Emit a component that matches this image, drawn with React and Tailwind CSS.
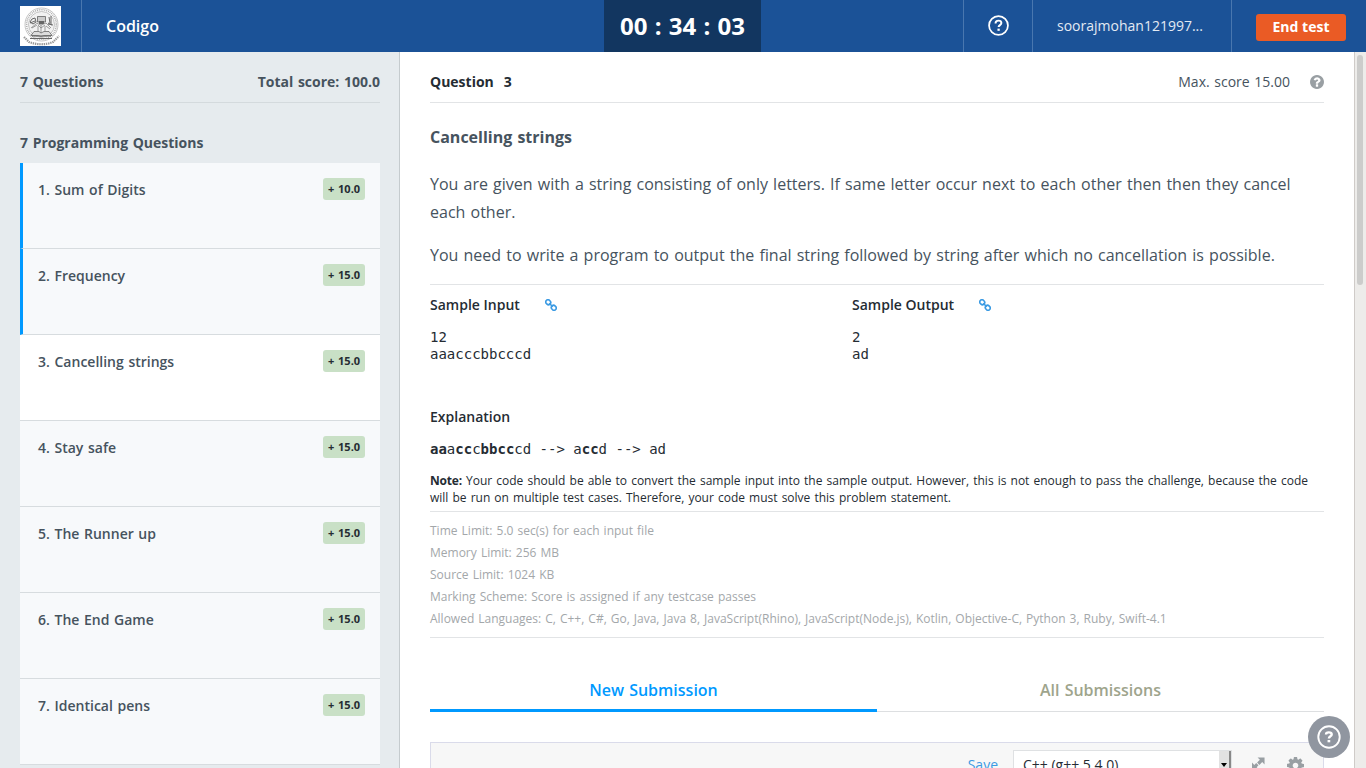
const questions = [
  { title: "Sum of Digits", score: "10.0", done: true },
  { title: "Frequency", score: "15.0", done: true },
  { title: "Cancelling strings", score: "15.0", current: true },
  { title: "Stay safe", score: "15.0" },
  { title: "The Runner up", score: "15.0" },
  { title: "The End Game", score: "15.0" },
  { title: "Identical pens", score: "15.0" },
];

function HelpRing({ className }) {
  return (
    <svg viewBox="0 0 24 24" className={className} fill="none" stroke="currentColor">
      <circle cx="12" cy="12" r="10.8" strokeWidth="2" />
      <path d="M8.6 9.6c0-2 1.4-3.2 3.3-3.2s3.4 1 3.4 2.8c0 2.3-3.2 2.4-3.2 4.6" strokeWidth="2.2" />
      <path d="M12.1 15.6v2.5" strokeWidth="2.6" />
    </svg>
  );
}

function HelpBadge({ className }) {
  return (
    <svg viewBox="0 0 24 24" className={className} fill="none" stroke="currentColor">
      <circle cx="12" cy="12" r="10.7" strokeWidth="1.9" />
      <path d="M9 9.5c0-1.4 1.3-2.1 2.8-2.1 1.7 0 2.9.7 2.9 2.1 0 1.900-2.800 1.700-2.800 4" strokeWidth="2.4" />
      <path d="M11.9 15v2.300" strokeWidth="2.700" />
    </svg>
  );
}

function QuestionCircle({ className }) {
  return (
    <svg viewBox="128 128 1536 1536" className={className} fill="currentColor">
      <path d="M1024 1376v-192q0-14-9-23t-23-9h-192q-14 0-23 9t-9 23v192q0 14 9 23t23 9h192q14 0 23-9t9-23zM1280 704q0-88-55.5-163t-138.5-116-170-41q-243 0-371 213-15 24 8 42l132 100q7 6 19 6 16 0 25-12 53-68 86-92 34-24 86-24 48 0 85.5 26t37.5 59q0 38-20 61t-68 45q-63 28-115.5 86.5t-52.5 125.5v36q0 14 9 23t23 9h192q14 0 23-9t9-23q0-19 21.5-49.5t54.5-49.5q32-18 49-28.5t46-35 44.5-48 28-60.5 12.5-81zM1664 896q0 209-103 385.5t-279.5 279.5-385.5 103-385.5-103-279.5-279.5-103-385.5 103-385.5 279.5-279.5 385.5-103 385.5 103 279.5 279.5 103 385.5z" />
    </svg>
  );
}

function Gear({ className }) {
  return (
    <svg viewBox="128 128 1536 1536" className={className} fill="currentColor">
      <path d="M1152 896q0-106-75-181t-181-75-181 75-75 181 75 181 181 75 181-75 75-181zm512-109v222q0 12-8 23t-20 13l-185 28q-19 54-39 91 35 50 107 138 10 12 10 25t-9 23q-27 37-99 108t-94 71q-12 0-26-9l-138-108q-44 23-91 38-16 136-29 186-7 28-36 28h-222q-14 0-24.5-8.5t-11.5-21.5l-28-184q-49-16-90-37l-141 107q-10 9-25 9-14 0-25-11-126-114-165-168-7-10-7-23 0-12 8-23 15-21 51-66.5t54-70.5q-27-50-41-99l-183-27q-13-2-21-12.5t-8-23.5v-222q0-12 8-23t19-13l186-28q14-46 39-92-40-57-107-138-10-12-10-24 0-10 9-23 26-36 98.5-107.5t94.5-71.5q13 0 26 10l138 107q44-23 91-38 16-136 29-186 7-28 36-28h222q14 0 24.5 8.5t11.5 21.5l28 184q49 16 90 37l142-107q9-9 24-9 13 0 25 10 129 119 165 170 7 8 7 22 0 12-8 23-15 21-51 66.5t-54 70.5q26 50 41 98l183 28q13 2 21 12.5t8 23.5z" />
    </svg>
  );
}

function CrestLogo() {
  return (
    <svg viewBox="0 0 41 40" className="h-10 w-[41px] bg-white" fill="none" stroke="#888" strokeWidth="0.7">
      <circle cx="21.5" cy="18.5" r="16.5" stroke="#aaa" />
      <circle cx="21.5" cy="18.5" r="14.8" stroke="#aaa" strokeWidth="1.6" strokeDasharray="1 0.9" />
      <circle cx="21.5" cy="18.5" r="13" fill="#f1f1f1" stroke="#aaa" />
      <path d="M17.500 10.500h8v5.500h-8z" fill="#ccc" stroke="#555" />
      <path d="M19 15h5v3h-5z" fill="#666" stroke="none" />
      <path d="M10 16l2-3 3-1 1 4-3 2zM10 17l5-2M28 18l5 1M28 17l4 2M29 11l1 6M31 10v8" stroke="#666" strokeWidth="1" />
      <path d="M16 17l5 2 5-2 5 5M16 18l-5 4M18 19l3 3 4-3M18 20v5M25 20v5M21 19v9M12 22l5-3M30 23l-4-3" stroke="#777" />
      <path d="M14 25.500h5l2 1.500 3-1.500h5l3 4h-8l-3 1-3-1h-7z" fill="#ddd" stroke="#555" />
      <path d="M12 30h19M10 32.500h22" stroke="#666" strokeWidth="1.1" />
      <path d="M4 31l5 5c8 3 17 3 24 0l6-6" stroke="#999" strokeWidth="2.2" strokeDasharray="1.4 0.8" />
    </svg>
  );
}

function LinkIcon() {
  return (
    <svg viewBox="0 0 12 12" className="size-3 text-[#3c9be3]" fill="none" stroke="currentColor" strokeWidth="1.600">
      <rect x="-2.500" y="-2.200" width="5" height="4.400" rx="2" transform="translate(3.200 3.200) rotate(45)" />
      <rect x="-2.500" y="-2.200" width="5" height="4.400" rx="2" transform="translate(8.800 8.800) rotate(45)" />
      <path d="M4.200 4.200l3.600 3.600" />
    </svg>
  );
}

function Header() {
  return (
    <header className="flex h-[52px] shrink-0 bg-[#1b5297] text-white">
      <div className="flex w-[82px] items-center border-r border-[#4977af] pl-5">
        <CrestLogo />
      </div>
      <div className="flex w-[522px] items-center pl-6 text-[16px] font-semibold">Codigo</div>
      <div className="flex w-[157px] items-center justify-center bg-[#123660] text-[24px] font-bold whitespace-pre">00 : 34 : 03</div>
      <div className="w-[202px]" />
      <div className="flex w-[70px] items-center justify-center border-x border-[#4977af]">
        <HelpRing className="mb-0.5 size-[21px]" />
      </div>
      <div className="flex w-[199px] items-center border-r border-[#4977af] pb-0.5 pl-6 text-[14px] text-[#e3eaf3]">soorajmohan121997...</div>
      <div className="flex items-center pl-6">
        <button className="mt-0.5 h-[27px] w-[90px] rounded-[3px] bg-[#ea5b25] pb-0.5 text-[14px] font-bold [word-spacing:0px]">End test</button>
      </div>
    </header>
  );
}

function Sidebar() {
  return (
    <aside className="w-[400px] shrink-0 overflow-hidden border-r border-[#c5cbce] bg-[#e6ebee] px-5 pr-[19px] text-[14px] text-[#46535e]">
      <div className="flex h-[51px] items-center justify-between border-b border-[#d4dadd] pt-[9px] font-bold">
        <span>7 Questions</span>
        <span>Total score: 100.0</span>
      </div>
      <div className="flex h-[60px] items-end pb-2.5 font-bold">7 Programming Questions</div>
      <ul>
        {questions.map((q, i) => (
          <li key={q.title} className={`flex ${q.done ? "border-l-3 border-l-[#0099ff] pl-[15px]" : "pl-[18px]"} ${q.current ? "bg-white" : "bg-[#f7f9fb]"} h-[86px] items-start justify-between border-b border-b-[#d7dcdf] pt-[15px] pr-[15px]`}>
            <span className="pt-px leading-[22px] font-semibold">{i + 1}. {q.title}</span>
            <span className="flex h-[22px] w-[42px] items-center justify-center rounded-[3px] bg-[#c9e0c6] text-[11px] font-bold text-[#252c33]">+ {q.score}</span>
          </li>
        ))}
      </ul>
    </aside>
  );
}

function Sample({ label, children, className }) {
  return (
    <div className={className}>
      <div className="flex h-10 items-center gap-[25px] text-[14px] font-semibold [word-spacing:0px]">
        <span className="-mt-0.5">{label}</span>
        <LinkIcon />
      </div>
      <pre className="pt-1 font-['DejaVu_Sans_Mono',monospace] text-[14px] leading-[17px] [word-spacing:0px]">{children}</pre>
    </div>
  );
}

function Question() {
  return (
    <main className="flex h-full w-[954px] shrink-0 flex-col overflow-hidden bg-white px-[30px] text-[#252c33]">
      <div className="flex h-[51px] shrink-0 items-center border-b border-[#e2e4e6] pt-[9px] text-[14px]">
        <span className="font-bold">Question</span>
        <span className="ml-2.5 flex-1 font-bold">3</span>
        <span className="text-[#46535e]">Max. score 15.00</span>
        <QuestionCircle className="ml-5 size-[14px] text-[#999fa3]" />
      </div>
      <h1 className="mt-[22px] h-6 shrink-0 text-[16px] leading-6 font-bold text-[#46535e]">Cancelling strings</h1>
      <div className="mt-[21px] h-[114px] shrink-0 text-[16px] leading-7 text-[#46535e]">
        <p className="whitespace-nowrap">You are given with a string consisting of only letters. If same letter occur next to each other then then they cancel<br />each other.</p>
        <p className="mt-[15px] whitespace-nowrap">You need to write a program to output the final string followed by string after which no cancellation is possible.</p>
      </div>
      <div className="flex h-[112px] shrink-0 border-t border-[#e2e4e6]">
        <Sample className="w-[422px]" label="Sample Input">{"12\naaacccbbcccd"}</Sample>
        <Sample label="Sample Output">{"2\nad"}</Sample>
      </div>
      <div className="mt-[11px] h-5 shrink-0 text-[14px] leading-5 font-semibold">Explanation</div>
      <pre className="mt-[14px] shrink-0 font-['DejaVu_Sans_Mono',monospace] text-[14px] leading-[17px] [word-spacing:0px]"><b>aa</b>a<b>cc</b>c<b>bbcc</b>cd --&gt; a<b>cc</b>d --&gt; ad</pre>
      <p className="mt-[14px] h-[40px] shrink-0 border-b border-[#e2e4e6] text-[12px] leading-[17px] whitespace-nowrap [word-spacing:0.97px]"><b className="tracking-[-0.2px]">Note:</b> Your code should be able to convert the sample input into the sample output. However, this is not enough to pass the challenge, because the code<br />will be run on multiple test cases. Therefore, your code must solve this problem statement.</p>
      <div className="h-[126px] shrink-0 border-b border-[#e2e4e6] pt-2 text-[12px] leading-[22px] whitespace-nowrap text-[#a3a7aa]">
        <p>Time Limit: 5.0 sec(s) for each input file</p>
        <p>Memory Limit: 256 MB</p>
        <p>Source Limit: 1024 KB</p>
        <p>Marking Scheme: Score is assigned if any testcase passes</p>
        <p className="[word-spacing:0.9px]">Allowed Languages: C, C++, C#, Go, Java, Java 8, JavaScript(Rhino), JavaScript(Node.js), Kotlin, Objective-C, Python 3, Ruby, Swift-4.1</p>
      </div>
      <div className="mt-[30px] flex h-11 shrink-0 text-center text-[16px] leading-[45px] font-semibold">
        <div className="w-[447px] border-b-3 border-[#0099ff] text-[#0099ff]">New Submission</div>
        <div className="w-[447px] border-b border-[#dddfe1] text-[#9ea48c]">All Submissions</div>
      </div>
      <div className="mt-[30px] flex h-12 shrink-0 items-start justify-end border border-b-0 border-[#dadbea] bg-[#f7f7f7] pt-[7px]">
        <span className="mr-[15px] pt-[5px] text-[14px] leading-5 text-[#3c9be3]">Save</span>
        <div className="flex h-[30px] w-[219px] justify-between border border-[#dfe1e3] bg-white pl-[9px] text-[14px] text-[#252c33]">
          <span className="pt-1 leading-5 [word-spacing:0px]">C++ (g++ 5.4.0)</span>
          <span className="flex w-3 items-start justify-center border-r-2 border-[#888] bg-[#e2e2e2] pt-3">
            <svg viewBox="0 0 6 4" className="h-1 w-1.5"><path d="M0 0h6L3 4z" fill="#000" /></svg>
          </span>
        </div>
        <svg viewBox="0 0 14 14" className="mt-[7px] ml-5 size-[13px] text-[#999fa3]" fill="currentColor">
          <path d="M6 0.500h7.500v7.500l-2.500-2.500-3 3-2.500-2.500 3-3zM7.500 13.500H0V6l2.500 2.500 2-2L7 9l-2 2z" />
        </svg>
        <Gear className="mt-[7px] mr-[19px] ml-[22px] size-[17px] text-[#999fa3]" />
      </div>
    </main>
  );
}

export default function App() {
  return (
    <div className="relative flex h-[768px] w-[1366px] flex-col overflow-hidden bg-white font-['Open_Sans',sans-serif] [word-spacing:1px]">
      <Header />
      <div className="flex h-[716px]">
        <Sidebar />
        <Question />
        <div className="w-3 border-l border-[#cfcbc8] bg-[#edecea] pt-[3px] pl-0.5">
          <div className="h-[230px] w-1.5 rounded-full bg-[#cccccb]" />
        </div>
      </div>
      <button className="absolute top-[716px] left-[1308px] flex size-[42px] items-center justify-center rounded-full bg-[#9096a0] text-white">
        <HelpBadge className="size-6" />
      </button>
    </div>
  );
}
